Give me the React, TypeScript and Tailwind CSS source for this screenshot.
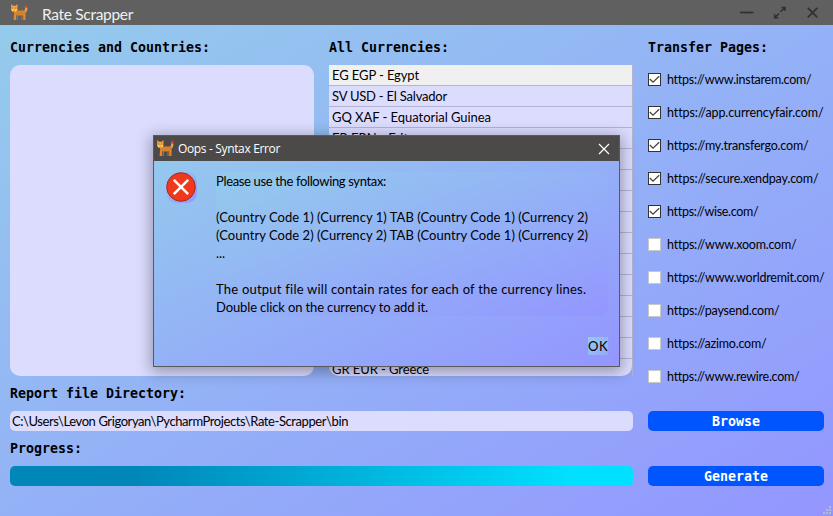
import { useLayoutEffect, useRef, useState } from "react";

const pages = [
  { url: "https://www.instarem.com/", width: 144, on: true },
  { url: "https://app.currencyfair.com/", width: 156, on: true },
  { url: "https://my.transfergo.com/", width: 141, on: true },
  { url: "https://secure.xendpay.com/", width: 151, on: true },
  { url: "https://wise.com/", width: 91, on: true },
  { url: "https://www.xoom.com/", width: 129, on: false },
  { url: "https://www.worldremit.com/", width: 157, on: false },
  { url: "https://paysend.com/", width: 112, on: false },
  { url: "https://azimo.com/", width: 99, on: false },
  { url: "https://www.rewire.com/", width: 132, on: false },
];

const emptyRow = { name: "", width: 0 };

const currencies = [
  { name: "EG EGP - Egypt", width: 87 },
  { name: "SV USD - El Salvador", width: 115 },
  { name: "GQ XAF - Equatorial Guinea", width: 159 },
  { name: "ER ERN - Eritrea", width: 94 },
  ...Array.from({ length: 10 }, () => emptyRow),
  { name: "GR EUR - Greece", width: 97 },
];

const message = [
  { text: "Please use the following syntax:", width: 170 },
  { text: "", width: 0 },
  { text: "(Country Code 1) (Currency 1) TAB (Country Code 1) (Currency 2)", width: 372 },
  { text: "(Country Code 2) (Currency 2) TAB (Country Code 1) (Currency 2)", width: 372 },
  { text: "...", width: 9 },
  { text: "", width: 0 },
  { text: "The output file will contain rates for each of the currency lines.", width: 370 },
  { text: "Double click on the currency to add it.", width: 212 },
];

/** Single line of text whose tracking is adjusted to span a given width. */
function FitText({ text, width }: { text: string; width: number }) {
  const ref = useRef<HTMLSpanElement>(null);
  const [spacing, setSpacing] = useState(0);
  useLayoutEffect(() => {
    if (ref.current && text.length > 0) {
      const natural = ref.current.getBoundingClientRect().width - spacing * text.length;
      setSpacing((width - natural) / text.length);
    }
  }, [text, width]);
  return (
    <span ref={ref} className="inline-block whitespace-pre" style={{ letterSpacing: `${spacing}px` }}>
      {text}
    </span>
  );
}

function Fox() {
  return (
    <svg width="17" height="17" viewBox="0 0 17 17" className="shrink-0">
      <path d="M13 7.5 L14 5 L14.5 2 L16.6 3.5 L16 7 L14.3 9Z" fill="#eda040" />
      <path d="M14.7 0 L16.6 1.5 L16.6 4 L14.6 3.4Z" fill="#d8392c" />
      <path d="M4 6.5 H14.5 V11.5 H3 V8Z" fill="#d5812d" />
      <path d="M3 10.5 H5 V16 H2.6Z M12.4 10.5 H14.5 V16 H12.2Z" fill="#dc8a33" />
      <path d="M5.7 11 H7 V16 H5.6Z M10.5 11 H11.7 V16 H10.3Z" fill="#b06a2a" />
      <path d="M0.2 0 L2 1.8 H4.6 L6.4 0 V6 L4.6 7.8 H2 L0.2 6Z" fill="#f3a63c" />
      <path d="M0.2 5 H2.4 V7.4 H1.4Z M4.2 5 H6.4 L5.2 7.4 H4.2Z" fill="#fad566" />
      <path d="M1.4 3.6 H2.2 V4.4 H1.4Z M4.4 3.6 H5.2 V4.4 H4.4Z" fill="#8a5a2c" />
    </svg>
  );
}

function Heading({ children }: { children: string }) {
  return (
    <h2 className="h-5 whitespace-pre font-['DejaVu_Sans_Mono',monospace] text-[13.29px] leading-5 font-bold">
      {children}
    </h2>
  );
}

function ActionButton({ children }: { children: string }) {
  return (
    <button className="block h-5 w-full rounded-[5px] bg-[#0055ff] pt-px text-center font-['DejaVu_Sans_Mono',monospace] text-[13.29px] leading-5 font-bold text-white">
      {children}
    </button>
  );
}

function ErrorDialog() {
  return (
    <div className="absolute top-[135px] left-[153px] flex h-[232px] w-[467px] flex-col border border-[#5a5a5e] bg-linear-to-br from-[#94cbec] to-[#9396ff] shadow-[0_3px_14px_2px_rgba(0,0,0,0.32)]">
      <div className="flex h-[25px] shrink-0 items-center bg-[#4b4a48] pr-[9px] pl-[3px] font-['Open_Sans',sans-serif] text-xs text-white">
        <Fox />
        <span className="ml-1 flex-1">
          <FitText text="Oops - Syntax Error" width={102} />
        </span>
        <svg width="12" height="12" viewBox="0 0 12 12" stroke="#fff" strokeWidth="1.2">
          <path d="M1 1 L11 11 M11 1 L1 11" />
        </svg>
      </div>
      <div className="flex pt-[11px] pl-3">
        <div className="h-[31px] w-[31px] rounded-[10px] bg-linear-to-br from-[#94cbec] to-[#9396ff]">
          <svg width="30" height="30" viewBox="0 0 30 30">
            <circle cx="15" cy="15" r="14.3" fill="#f0391c" stroke="#a82a20" />
            <path d="M7.8 7.8 L22.2 22.2 M22.2 7.8 L7.8 22.2" stroke="#fff" strokeWidth="2.5" />
          </svg>
        </div>
        <div className="ml-[19px] h-[144px] w-[392px] rounded-[10px] bg-linear-to-br from-[#94cbec] to-[#9396ff]">
          {message.map((line, i) => (
            <div key={i} className="h-[18px] leading-[18px]">
              <FitText text={line.text} width={line.width} />
            </div>
          ))}
        </div>
      </div>
      <div className="mt-[21px] flex justify-end pr-[11px]">
        <button className="h-[18px] w-5 bg-linear-to-br from-[#94cbec] to-[#94a8f8] text-left leading-[18px]">
          <FitText text="OK" width={20} />
        </button>
      </div>
    </div>
  );
}

export default function App() {
  return (
    <div className="relative h-[516px] w-[833px] overflow-hidden bg-[#606060] font-[Lato,sans-serif] text-[13px] text-black">
      <header className="flex h-[25px] items-center pr-[15px] pl-[11px] text-[#f0f0f0]">
        <Fox />
        <span className="ml-[14px] flex-1 pt-[2px] text-[15.5px] leading-5">
          <FitText text="Rate Scrapper" width={91} />
        </span>
        <svg width="78" height="14" viewBox="0 0 78 14" fill="none" stroke="#303030" strokeWidth="1.7">
          <path d="M0 6.5 H13.5" />
          <path d="M40.5 5.8 L45 1.5 M41.5 1.5 H45 V5 M39 7.5 L34.7 11.8 M34.7 8.3 V11.8 H38.2" strokeWidth="1.5" />
          <path d="M67.8 1.8 L77.3 11.3 M77.3 1.8 L67.8 11.3" />
        </svg>
      </header>

      <main className="flex h-[491px] gap-[15px] bg-linear-to-br from-[#94cbec] to-[#9396ff] pt-[13px] pl-[10px]">
        <div className="w-[623px]">
          <div className="flex gap-[15px]">
            <section className="w-[304px]">
              <Heading>Currencies and Countries:</Heading>
              <div className="mt-[7px] h-[311px] rounded-[10px] bg-[#dcdcff]" />
            </section>
            <section className="w-[304px]">
              <Heading>All Currencies:</Heading>
              <div className="mt-[7px] h-[311px] border-r border-[#b4b4cc]">
                <ul className="h-[311px] overflow-hidden rounded-b-[10px] bg-[#dcdcff]">
                  {currencies.map((c, i) => (
                    <li
                      key={i}
                      className={
                        i === 0
                          ? "h-[21px] border-b border-[#b4b4d2] bg-[#f0f0f0] pl-[3px] leading-[21px]"
                          : "h-[21px] border-b border-[#b4b4d2] pl-[3px] leading-[21px]"
                      }
                    >
                      <FitText text={c.name} width={c.width} />
                    </li>
                  ))}
                </ul>
              </div>
            </section>
          </div>
          <div className="mt-2">
            <Heading>Report file Directory:</Heading>
          </div>
          <div className="mt-[7px] h-5 rounded-[5px] bg-[#dcdcff] pl-[2px] leading-[21px]">
            <FitText text="C:\Users\Levon Grigoryan\PycharmProjects\Rate-Scrapper\bin" width={336} />
          </div>
          <div className="mt-2">
            <Heading>Progress:</Heading>
          </div>
          <div className="mt-[7px] h-5 rounded-[5px] bg-linear-to-r from-[#0087b8] from-20% to-[#00e0ff] to-90%" />
        </div>

        <aside className="w-44">
          <Heading>Transfer Pages:</Heading>
          <ul className="mt-[5px]">
            {pages.map((p) => (
              <li key={p.url} className="flex h-[33px] items-center">
                <span
                  className={
                    p.on
                      ? "h-[13px] w-[13px] shrink-0 border border-[#333] bg-white"
                      : "h-[13px] w-[13px] shrink-0 border border-[#c8c8c8] bg-white"
                  }
                >
                  {p.on && (
                    <svg width="11" height="11" viewBox="0 0 11 11" fill="none" stroke="#444" strokeWidth="1.3">
                      <path d="M0.8 5 L4 8.2 L10.2 2.3" />
                    </svg>
                  )}
                </span>
                <span className="ml-[6px] pt-px text-[12.5px]">
                  <FitText text={p.url} width={p.width} />
                </span>
              </li>
            ))}
          </ul>
          <div className="mt-[18px]">
            <ActionButton>Browse</ActionButton>
          </div>
          <div className="mt-[35px]">
            <ActionButton>Generate</ActionButton>
          </div>
        </aside>
      </main>

      <svg width="8" height="8" viewBox="0 0 8 8" fill="#bcbcbc" className="absolute right-[2px] bottom-[2px]">
        <path d="M6 0h2v2h-2z M3 3h2v2h-2z M6 3h2v2h-2z M0 6h2v2h-2z M3 6h2v2h-2z M6 6h2v2h-2z" />
      </svg>

      <ErrorDialog />
    </div>
  );
}
